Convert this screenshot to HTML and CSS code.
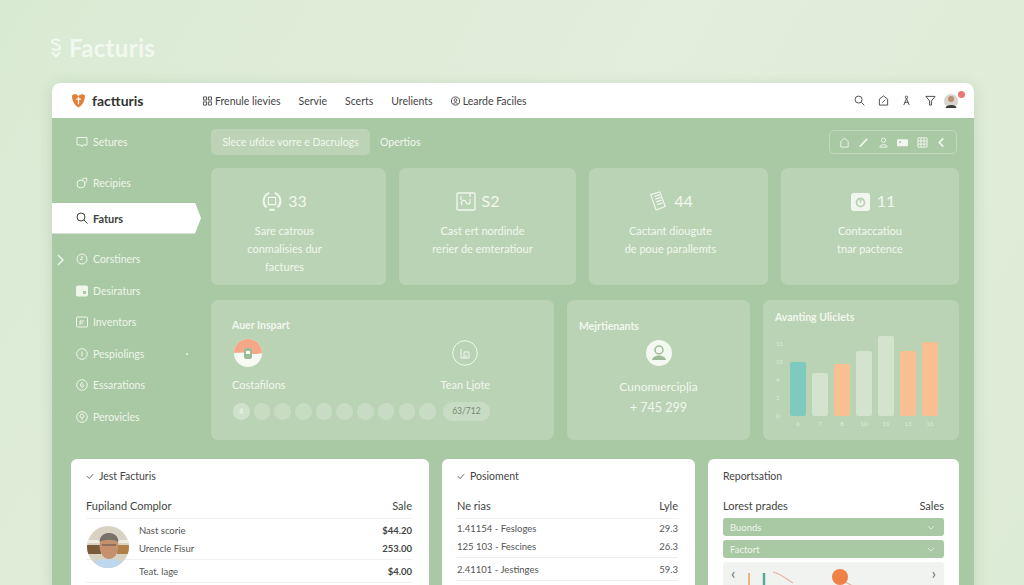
FILE: index.html
```html
<!DOCTYPE html>
<html lang="fr">
<head>
    <meta charset="UTF-8">
    <meta name="viewport" content="width=device-width, initial-scale=1.0">
    <title>Facturis</title>
    <link rel="stylesheet" href="styles.css">
</head>
<body>
    <div class="brand">
        <svg class="brand-icon" viewBox="0 0 12 20"><path d="M10 3C8 .8 2.500 .8 2 3.500c-.4 2.500 8 2.500 8 6 0 3-6 3-8 1M2 14l4 4.500 4-4.500" /></svg>
        <span>Facturis</span>
    </div>

    <div class="window">
        <header class="topbar">
            <div class="logo">
                <svg class="logo-icon" viewBox="0 0 14 15"><path d="M0 1.500C2-.5 5 0 7 2c2-2 5-2.500 7-.5 0 6-3 10.500-7 13C3 12 0 7.500 0 1.500z" /><path class="logo-mark" d="M7 3v8M4.500 5.500h5" /></svg>
                <span>factturis</span>
            </div>
            <nav class="topnav">
                <a><svg class="nav-icon" viewBox="0 0 10 10"><path d="M.5.5h3.500v3.500H.5zM6 .5h3.500v3.500H6zM.5 6h3.500v3.500H.5zM6 6h3.500v3.500H6z" /></svg>Frenule lievies</a>
                <a>Servie</a>
                <a>Scerts</a>
                <a>Urelients</a>
                <a><svg class="nav-icon" viewBox="0 0 10 10"><circle cx="5" cy="5" r="4.500" /><circle cx="5" cy="4" r="1.500" /><path d="M2.800 8c.3-1.500 4.100-1.500 4.400 0" /></svg>Learde Faciles</a>
            </nav>
            <div class="top-actions">
                <svg class="top-icon" viewBox="0 0 12 12"><circle cx="5" cy="5" r="3.800" /><path d="M8 8l3.300 3.300" /></svg>
                <svg class="top-icon" viewBox="0 0 12 12"><path d="M1.500 11V4.500L6 1l4.500 3.500V11z" /><path d="M4.500 8.500L8 5" /></svg>
                <svg class="top-icon" viewBox="0 0 12 12"><circle cx="6" cy="2.500" r="1.300" /><path d="M6 4L3 11M6 4l3 7M4 8h4" /></svg>
                <svg class="top-icon" viewBox="0 0 12 12"><path d="M1 1.500h10L7 6.500V11H5V6.500z" /></svg>
                <div class="top-avatar">
                    <svg viewBox="0 0 14 16"><circle cx="7" cy="8" r="7" fill="#d9d5cc" /><circle cx="7" cy="6" r="3" fill="#b98f78" /><path d="M1.500 15c.5-4 11-4 11 0z" fill="#3a3d3a" /></svg>
                    <span class="dot"></span>
                </div>
            </div>
        </header>

        <div class="workspace">
            <aside class="sidebar">
                <a class="side-item side-first"><svg class="side-icon" viewBox="0 0 12 12"><path d="M1 1.500h10v7.500H7l-1 1.500L5 9H1z" /></svg>Setures</a>
                <a class="side-item"><svg class="side-icon" viewBox="0 0 12 12"><circle cx="5" cy="7" r="4" /><path d="M6 2.500c1-1.500 4-1.500 5-1 0 2-.5 4-2.500 5" /></svg>Recipies</a>
                <a class="side-item active"><svg class="side-icon" viewBox="0 0 12 12"><circle cx="5" cy="5" r="4" /><path d="M8 8l3.500 3.500" /></svg>Faturs</a>
                <a class="side-item"><svg class="caret" viewBox="0 0 7 12"><path d="M1 1l5 5-5 5" /></svg><svg class="side-icon" viewBox="0 0 12 12"><circle cx="6" cy="6" r="5" /><path d="M6 3v3.500H4" /></svg>Corstiners</a>
                <a class="side-item"><svg class="side-icon" viewBox="0 0 12 12"><rect x=".5" y="1" width="11" height="10" rx="1" class="filled" /><path d="M7 6h3v3H7z" class="cut" /></svg>Desiraturs</a>
                <a class="side-item"><svg class="side-icon" viewBox="0 0 12 12"><rect x=".5" y="1" width="11" height="10" rx="1" /><path d="M4 9V5h4M4 7h3" /></svg>Inventors</a>
                <a class="side-item"><svg class="side-icon" viewBox="0 0 12 12"><circle cx="6" cy="6" r="5.300" /><path d="M6 3.500v5" /></svg>Pespiolings<span class="side-dot"></span></a>
                <a class="side-item"><svg class="side-icon" viewBox="0 0 12 12"><circle cx="6" cy="6" r="5.300" /><path d="M7.500 4C6 3 4.200 4.500 4.500 6.500S7 9 7.700 7.200 5.500 5.800 4.800 6.800" /></svg>Essarations</a>
                <a class="side-item"><svg class="side-icon" viewBox="0 0 12 12"><circle cx="6" cy="6" r="5.300" /><circle cx="6" cy="5" r="2" /><path d="M6 7v2" /></svg>Perovicles</a>
            </aside>

            <main class="content">
                <div class="toolbar">
                    <div class="search-pill">Slece ufdce vorre e Dacrulogs</div>
                    <span class="toolbar-link">Opertios</span>
                    <div class="tool-group">
                        <svg class="tool-icon" viewBox="0 0 12 12"><path d="M2 11V5l4-4 4 4v6z" /></svg>
                        <svg class="tool-icon" viewBox="0 0 12 12"><path class="thick" d="M2 10.500L10 2" /></svg>
                        <svg class="tool-icon" viewBox="0 0 12 12"><circle cx="6" cy="3.500" r="2.300" /><path d="M2 11c0-3.500 8-3.500 8 0z" /></svg>
                        <svg class="tool-icon" viewBox="0 0 12 12"><rect y="2.500" width="12" height="7.500" rx="1" class="filled" /><circle cx="3.500" cy="5.500" r="1.200" class="cut" /></svg>
                        <svg class="tool-icon" viewBox="0 0 12 12"><path d="M1 1h10v10H1zM1 4.300h10M1 7.700h10M4.300 1v10M7.700 1v10" /></svg>
                        <svg class="tool-icon" viewBox="0 0 12 12"><path class="thick" d="M8 1.500L3.500 6 8 10.500" /></svg>
                    </div>
                </div>

                <div class="stats">
                    <div class="card stat stat-one">
                        <div class="stat-head">
                            <svg class="stat-icon" viewBox="0 0 22 22"><path class="arc" d="M5 18A9.500 9.500 0 0 1 8 2M14 2a9.500 9.500 0 0 1 3 16M8 20.500h6" /><path d="M7 7h8v8H7z" /></svg>
                            <span>33</span>
                        </div>
                        <p>Sare catrous<br>conmalisies dur<br>factures</p>
                    </div>
                    <div class="card stat stat-two">
                        <div class="stat-head">
                            <svg class="stat-icon" viewBox="0 0 20 20"><rect x="1" y="2" width="18" height="17" rx="1" /><path d="M5 5v4M14 2v4M6 14c-2-5 3-6 4-3s5 3 4-3" /></svg>
                            <span>S2</span>
                        </div>
                        <p>Cast ert nordinde<br>rerier de emteratiour</p>
                    </div>
                    <div class="card stat stat-three">
                        <div class="stat-head">
                            <svg class="stat-icon" viewBox="0 0 20 22"><path d="M2 4l10-3 6 16-10 4z" /><path d="M6 6l6-2M7 9l6-2M8 12l6-2M9 15l6-2" /></svg>
                            <span>44</span>
                        </div>
                        <p>Cactant diougute<br>de poue parallemts</p>
                    </div>
                    <div class="card stat stat-four">
                        <div class="stat-head">
                            <svg class="stat-icon" viewBox="0 0 20 20"><rect y="2" width="19" height="18" rx="3" class="solid" /><circle cx="9.500" cy="11.500" r="4" class="cut-line" /><path class="cut-line" d="M9.500 7.500v4" /></svg>
                            <span>11</span>
                        </div>
                        <p>Contaccatiou<br>tnar pactence</p>
                    </div>
                </div>

                <div class="panels">
                    <div class="card panel-main">
                        <h3>Auer Inspart</h3>
                        <div class="columns">
                            <div class="ring-block">
                                <svg class="pie" viewBox="0 0 28 28"><circle cx="14" cy="14" r="14" fill="#f7fbf4" /><path d="M0 14a14 14 0 0 1 28 0c-6 1.500-10 1-14 0S5 14 0 14z" fill="#f5a788" /><rect x="10" y="9" width="8" height="11" rx="2" fill="#9dbb98" /><rect x="12" y="12" width="4" height="3" fill="#f7fbf4" /></svg>
                                <span>Costafilons</span>
                            </div>
                            <div class="ring-block team">
                                <svg class="ring" viewBox="0 0 26 26"><circle cx="13" cy="13" r="12.300" /><path d="M9 9v9M9 18h8v-6h-5v6M14 15v3" /></svg>
                                <span>Tean Ljote</span>
                            </div>
                        </div>
                        <div class="dots">
                            <span class="circle first">4</span>
                            <span class="circle"></span><span class="circle"></span><span class="circle"></span>
                            <span class="circle"></span><span class="circle"></span><span class="circle"></span>
                            <span class="circle"></span><span class="circle"></span><span class="circle"></span>
                            <span class="count">63/712</span>
                        </div>
                    </div>
                    <div class="card panel-side">
                        <h3>Mejrtienants</h3>
                        <svg class="person" viewBox="0 0 26 26"><circle cx="13" cy="13" r="13" fill="#f3f8f0" /><circle cx="13" cy="10" r="4" fill="none" stroke="#9dbb98" stroke-width="1.500" /><path d="M6 20c1-6 13-6 14 0z" fill="#9dbb98" /></svg>
                        <span class="panel-label">Cunomıercipļia</span>
                        <strong>+ 745 299</strong>
                    </div>
                    <div class="card panel-chart">
                        <h3>Avanting UlicIets</h3>
                        <div class="chart">
                            <div class="y-axis"><span>11</span><span>15</span><span>4</span><span>2</span><span>0</span></div>
                            <div class="bars">
                                <div class="bar-col"><div class="bar teal" style="height:54px"></div><span>6</span></div>
                                <div class="bar-col"><div class="bar pale" style="height:43px"></div><span>7</span></div>
                                <div class="bar-col"><div class="bar peach" style="height:52px"></div><span>8</span></div>
                                <div class="bar-col"><div class="bar pale" style="height:65px"></div><span>10</span></div>
                                <div class="bar-col"><div class="bar pale" style="height:80px"></div><span>11</span></div>
                                <div class="bar-col"><div class="bar peach" style="height:65px"></div><span>13</span></div>
                                <div class="bar-col"><div class="bar peach" style="height:74px"></div><span>16</span></div>
                            </div>
                        </div>
                    </div>
                </div>
            </main>
        </div>

        <section class="lower">
            <div class="sheet sheet-invoices">
                <h4><svg class="tick" viewBox="0 0 10 8"><path d="M1 3.500L4 6.500 9 1" /></svg>Jest Facturis</h4>
                <div class="sheet-head"><span>Fupiland Complor</span><span>Sale</span></div>
                <div class="person-rows">
                    <svg class="photo" viewBox="0 0 42 42">
                        <clipPath id="photo-clip"><circle cx="21" cy="21" r="21" /></clipPath>
                        <g clip-path="url(#photo-clip)">
                            <rect width="42" height="42" fill="#d8d2c2" />
                            <rect y="14" width="42" height="3" fill="#f0ece0" />
                            <rect y="19" width="14" height="9" fill="#7a5a38" />
                            <rect x="30" y="19" width="12" height="9" fill="#b08048" />
                            <path d="M2 42c1-12 37-12 38 0z" fill="#bcd7ee" />
                            <ellipse cx="22" cy="20" rx="9.500" ry="13" fill="#c4906e" />
                            <path d="M12.500 16c0-12 19-12 19 0-5-3-14-3-19 0z" fill="#77726c" />
                            <path d="M15 19h5.500M23.500 19H29M20.500 19h3" stroke="#5a4f48" stroke-width="1" />
                        </g>
                    </svg>
                    <div class="person-lines">
                        <div class="row"><span>Nast scorie</span><b>$44.20</b></div>
                        <div class="row"><span>Urencle Fisur</span><b>253.00</b></div>
                        <div class="row row-rule"><span>Teat. lage</span><b>$4.00</b></div>
                    </div>
                </div>
            </div>
            <div class="sheet sheet-payments">
                <h4><svg class="tick" viewBox="0 0 10 8"><path d="M1 3.500L4 6.500 9 1" /></svg>Posioment</h4>
                <div class="sheet-head"><span>Ne rias</span><span>Lyle</span></div>
                <div class="row"><span>1.41154 - Fesloges</span><em>29.3</em></div>
                <div class="row"><span>125 103 - Fescines</span><em>26.3</em></div>
                <div class="row row-rule"><span>2.41101 - Jestinges</span><em>59.3</em></div>
            </div>
            <div class="sheet sheet-report">
                <h4>Reportsation</h4>
                <div class="sheet-head"><span>Lorest prades</span><span>Sales</span></div>
                <div class="select">Buonds<svg class="chev" viewBox="0 0 10 6"><path d="M1 1l4 4 4-4" /></svg></div>
                <div class="select">Factort<svg class="chev" viewBox="0 0 10 6"><path d="M1 1l4 4 4-4" /></svg></div>
                <div class="map">
                    <span class="map-arrow">‹</span>
                    <svg class="map-art" viewBox="0 0 190 20">
                        <path d="M11 8v12" stroke="#e9a25e" stroke-width="1.500" />
                        <path d="M26 8v12" stroke="#5aa89c" stroke-width="2.500" />
                        <path d="M35 7c8 2 12 6 20 11M105 16l10 5" stroke="#e6b49c" fill="none" stroke-width="1.200" />
                        <circle cx="102" cy="12" r="8" fill="#ef8146" />
                    </svg>
                    <span class="map-arrow">›</span>
                </div>
            </div>
        </section>
    </div>
</body>
</html>
```

FILE: styles.css
```css
* {
    box-sizing: border-box;
}
html, body {
    height: 585px;
    overflow: hidden;
}
body {
    margin: 0;
    padding: 83px 50px 0 52px;
    position: relative;
    font-family: 'Lato', 'Liberation Sans', sans-serif;
    color: #3e443e;
    background: linear-gradient(120deg, #d9ead3 0%, #e3eedc 50%, #dcebd5 100%);
}
svg {
    fill: none;
    stroke: currentColor;
    stroke-width: 1;
    flex: none;
}
h3, h4, p {
    margin: 0;
}

/* page brand above the window */
.brand {
    position: absolute;
    top: 36px;
    left: 50px;
    display: flex;
    align-items: center;
    gap: 7px;
    color: #f2f8ef;
    font-size: 24px;
    font-weight: 700;
    letter-spacing: 0.3px;
    line-height: 24px;
}
.brand-icon {
    width: 12px;
    height: 20px;
    stroke-width: 2;
}

/* window */
.window {
    height: 620px;
    background-color: #a9c8a4;
    border-radius: 8px 8px 0 0;
    box-shadow: 0 2px 14px rgba(120, 150, 115, 0.25);
    overflow: hidden;
}
.topbar {
    height: 35px;
    background-color: #fff;
    display: flex;
    align-items: center;
    padding: 0 9px 0 20px;
}
.logo {
    display: flex;
    align-items: center;
    gap: 7px;
    width: 131px;
    font-size: 14px;
    font-weight: 700;
    color: #333;
}
.logo-icon {
    width: 13px;
    height: 14px;
    fill: #e0803a;
    stroke: none;
}
.logo-mark {
    stroke: #fff;
    stroke-width: 1.300;
}
.topnav {
    display: flex;
    gap: 18px;
    font-size: 10.500px;
    color: #444;
}
.topnav a {
    display: flex;
    align-items: center;
    gap: 3px;
}
.nav-icon {
    width: 9px;
    height: 10px;
}
.top-actions {
    margin-left: auto;
    display: flex;
    align-items: center;
    gap: 12.500px;
    color: #444;
}
.top-icon {
    width: 11px;
    height: 11px;
}
.top-avatar {
    position: relative;
    width: 14px;
    height: 16px;
    margin: 0 7px 0 -4px;
}
.top-avatar svg {
    stroke: none;
    width: 14px;
    height: 16px;
    display: block;
}
.dot {
    position: absolute;
    top: -2px;
    right: -7px;
    width: 7px;
    height: 7px;
    border-radius: 50%;
    background-color: #ea7a70;
}

.workspace {
    display: flex;
    height: 341px;
}

/* sidebar */
.sidebar {
    width: 159px;
    color: #eef6ea;
    font-size: 10.500px;
    padding-top: 12px;
}
.side-item {
    position: relative;
    display: flex;
    align-items: center;
    height: 31.500px;
    padding-left: 24px;
    gap: 5px;
}
.side-first {
    margin-bottom: 13px;
    height: 24px;
}
.side-icon {
    width: 12px;
    height: 12px;
}
.side-icon .filled {
    fill: currentColor;
}
.side-icon .cut {
    fill: #a9c8a4;
    stroke: none;
}
.active {
    width: 149px;
    height: 31px;
    margin: 4px 0 10px;
    background-color: #fff;
    color: #3a3f3a;
    font-size: 11px;
    font-weight: 700;
    clip-path: polygon(0 0, 143px 0, 100% 50%, 143px 100%, 0 100%);
}
.caret {
    position: absolute;
    left: 5px;
    top: 10px;
    width: 7px;
    height: 12px;
    stroke-width: 1.500;
}
.side-dot {
    position: absolute;
    left: 134px;
    top: 15px;
    width: 2px;
    height: 2px;
    border-radius: 50%;
    background-color: #eef6ea;
}

/* main area */
.content {
    flex: 1;
    min-width: 0;
    padding: 11px 15px 0 0;
    color: #f1f7ee;
}
.toolbar {
    display: flex;
    align-items: center;
    gap: 10px;
    height: 26px;
    margin-bottom: 13px;
    font-size: 10.500px;
}
.search-pill {
    width: 159px;
    height: 26px;
    line-height: 26px;
    text-align: center;
    background-color: #bcd3b6;
    border-radius: 5px;
}
.tool-group {
    margin-left: auto;
    margin-right: 2px;
    width: 128px;
    height: 24px;
    display: flex;
    align-items: center;
    justify-content: space-between;
    padding: 0 9px;
    border: 1px solid #c3d9bd;
    border-radius: 5px;
}
.tool-icon {
    width: 11px;
    height: 11px;
}
.tool-icon .thick {
    stroke-width: 1.800;
}
.tool-icon .filled {
    fill: currentColor;
    stroke: none;
}
.tool-icon .cut {
    fill: #a9c8a4;
    stroke: none;
}

.card {
    background-color: #bbd3b5;
    border-radius: 7px;
}
.stats {
    display: grid;
    grid-template-columns: 175px 177px 179px 178px;
    column-gap: 13px;
    height: 117px;
    margin-bottom: 15px;
}
.stat {
    padding-top: 22px;
    text-align: center;
    font-size: 11px;
    line-height: 18px;
}
.stat-one {
    padding-right: 28px;
}
.stat-two {
    padding-right: 10px;
}
.stat-three {
    padding-right: 16px;
}
.stat-head {
    display: flex;
    align-items: center;
    justify-content: center;
    gap: 6px;
    height: 22px;
    margin-bottom: 10px;
    font-size: 16px;
}
.stat-two .stat-head {
    padding-right: 10px;
}
.stat-four .stat-head {
    padding-left: 6px;
}
.stat-icon {
    width: 20px;
    height: 20px;
    stroke-width: 1.300;
}
.stat-icon .arc {
    stroke-width: 2.200;
}
.stat-icon .solid {
    fill: currentColor;
    stroke: none;
}
.stat-icon .cut-line {
    stroke: #bbd3b5;
    stroke-width: 1.800;
}

.panels {
    display: grid;
    grid-template-columns: 343px 183px 196px;
    column-gap: 13px;
    height: 140px;
}
.panels h3 {
    font-size: 10.500px;
    line-height: 14px;
    font-weight: 700;
}
.panel-main {
    padding: 18px 21px 0;
}
.columns {
    display: flex;
    margin-top: 7px;
    font-size: 11px;
}
.ring-block {
    display: flex;
    flex-direction: column;
    align-items: flex-start;
    gap: 11px;
}
.team {
    margin-left: 155px;
    align-items: center;
}
.pie {
    width: 28px;
    height: 28px;
    margin-left: 2px;
    stroke: none;
}
.ring {
    width: 26px;
    height: 26px;
    margin: 1px 0;
}
.dots {
    display: flex;
    align-items: center;
    gap: 4.200px;
    margin-top: 11px;
    padding-left: 1px;
}
.circle {
    width: 16.500px;
    height: 16.500px;
    border-radius: 50%;
    background-color: #c8dcc3;
    font-size: 7px;
    line-height: 16px;
    text-align: center;
}
.circle.first {
    background-color: #d0e1cb;
}
.count {
    margin-left: 3px;
    width: 47px;
    height: 19px;
    border-radius: 9px;
    background-color: #c8dcc3;
    color: #76877a;
    font-size: 8.500px;
    line-height: 19px;
    text-align: center;
}
.panel-side {
    padding: 19px 12px 0;
    display: flex;
    flex-direction: column;
    align-items: center;
}
.panel-side h3 {
    align-self: flex-start;
}
.person {
    width: 26px;
    height: 26px;
    margin-top: 7px;
    stroke: none;
}
.panel-label {
    margin-top: 13px;
    font-size: 12px;
}
.panel-side strong {
    margin-top: 6px;
    font-size: 12.500px;
    font-weight: 400;
}
.panel-chart {
    padding: 10px 12px 0;
}
.panel-chart h3 {
    color: #f1f7ee;
}
.chart {
    display: flex;
    margin-top: 6px;
    height: 101px;
    font-size: 6px;
    color: #dcebd6;
}
.y-axis {
    width: 15px;
    display: flex;
    flex-direction: column;
    justify-content: space-between;
    padding: 10px 0 12px 1px;
}
.bars {
    display: flex;
    align-items: flex-end;
    gap: 6px;
}
.bar-col {
    width: 16px;
    text-align: center;
}
.bar-col span {
    display: block;
    height: 15px;
    line-height: 15px;
}
.bar {
    border-radius: 2px;
}
.teal {
    background-color: #7fcabf;
}
.pale {
    background-color: #d3e3ce;
}
.peach {
    background-color: #f8c092;
}

/* white sheets at the bottom */
.lower {
    display: grid;
    grid-template-columns: 358px 253px 251px;
    column-gap: 13px;
    padding-left: 19px;
}
.sheet {
    height: 140px;
    background-color: #fff;
    border-radius: 6px;
    padding: 10px 15px;
    font-size: 9.500px;
    color: #555;
}
.sheet-invoices, .sheet-payments {
    padding-right: 17px;
}
.sheet h4 {
    display: flex;
    align-items: center;
    gap: 5px;
    height: 14px;
    font-size: 10.500px;
    font-weight: 400;
    color: #444;
}
.tick {
    width: 8px;
    height: 7px;
}
.sheet-head {
    display: flex;
    justify-content: space-between;
    height: 27px;
    margin-top: 9px;
    padding-top: 7px;
    border-bottom: 1px solid #f0f2ef;
    font-size: 11px;
    line-height: 14px;
    color: #3e443e;
}
.row {
    display: flex;
    justify-content: space-between;
    height: 17.500px;
    line-height: 17.500px;
}
.sheet-payments .row {
    position: relative;
    top: 1px;
}
.row b {
    font-weight: 700;
    color: #444;
}
.row em {
    font-style: normal;
}
.row-rule {
    height: 24px;
    line-height: 24px;
    margin-top: 2px;
    border-top: 1px solid #eef0ed;
    border-bottom: 1px solid #eef0ed;
}
.person-rows {
    display: flex;
    padding-top: 3px;
}
.photo {
    position: relative;
    z-index: 1;
    width: 42px;
    height: 42px;
    margin: 4px 10px 0 1px;
    stroke: none;
}
.person-lines {
    flex: 1;
    min-width: 0;
}
.person-lines .row-rule {
    margin-left: -53px;
    padding-left: 53px;
    position: relative;
}
.select {
    display: flex;
    align-items: center;
    justify-content: space-between;
    height: 18px;
    margin-bottom: 4px;
    padding: 0 9px 0 7px;
    background-color: #a9c8a4;
    border-radius: 3px;
    color: #eef6ea;
}
.sheet-head + .select {
    margin-top: -1px;
}
.chev {
    width: 8px;
    height: 5px;
}
.map {
    display: flex;
    align-items: flex-start;
    justify-content: space-between;
    height: 40px;
    margin-top: 2px;
    padding: 3px 8px 0;
    background-color: #f1f3f0;
    border-radius: 3px;
}
.map-arrow {
    font-size: 16px;
    line-height: 16px;
    color: #6a7069;
}
.map-art {
    width: 190px;
    height: 20px;
    stroke: none;
}
```
